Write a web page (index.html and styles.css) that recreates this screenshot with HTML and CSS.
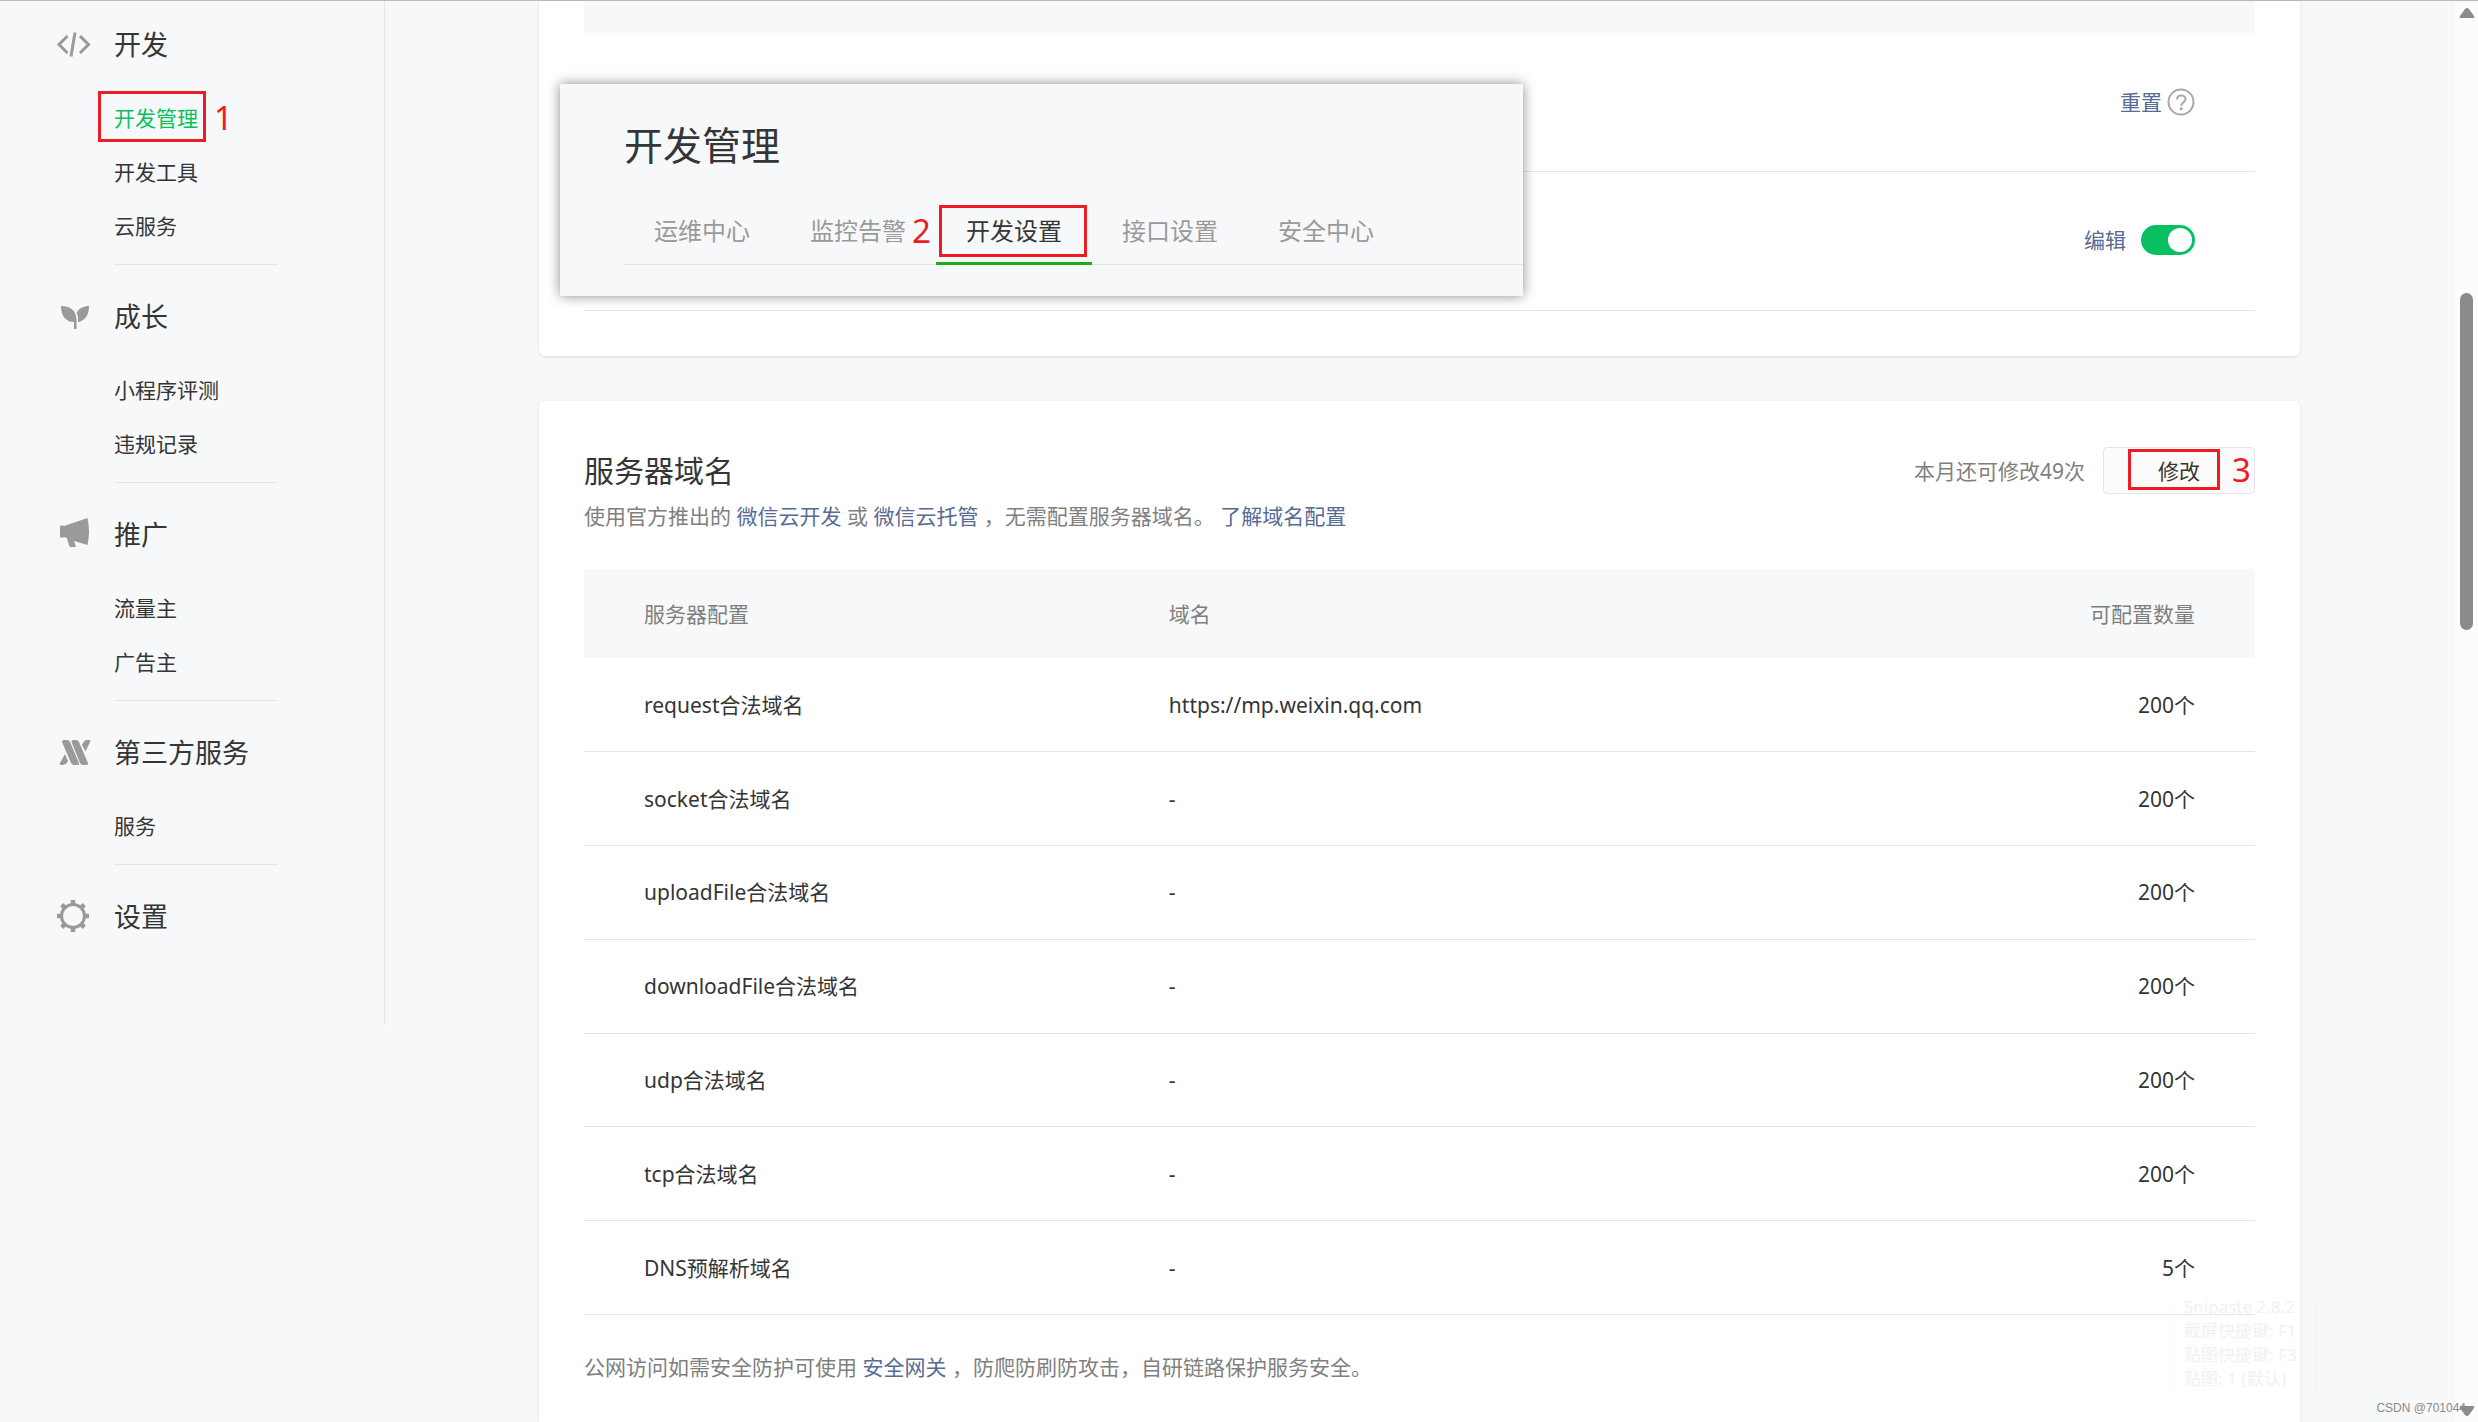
FILE: index.html
```html
<!DOCTYPE html>
<html lang="zh-CN">
<head>
<meta charset="utf-8">
<meta name="viewport" content="width=device-width, initial-scale=1">
<title>开发管理</title>
<link rel="stylesheet" href="styles.css">
</head>
<body>
<div class="page">
  <nav class="sidebar">
    <section class="group">
      <h2 class="group-title">
        <svg class="icon" viewBox="0 0 36 36" aria-hidden="true"><path d="M11.500 9 3 17.500l8.500 8.500M24 9l8.500 8.500L24 26M19 5.500l-4 24" fill="none" stroke="currentColor" stroke-width="3"/></svg>
        开发
      </h2>
      <ul class="items">
        <li><a class="current marked" href="#">开发管理<span class="step step-nav">1</span></a></li>
        <li><a href="#">开发工具</a></li>
        <li><a href="#">云服务</a></li>
      </ul>
    </section>
    <section class="group">
      <h2 class="group-title">
        <svg class="icon" viewBox="0 0 36 36" aria-hidden="true"><path d="M5 7c9 0 15 4 15.500 13v10H18v-7C10 23 5 17 5 7ZM33 7c0 9-4 15-11 16v-4c0-2-.5-3.500-1.500-5C23 9 28 7 33 7Z" fill="currentColor"/></svg>
        成长
      </h2>
      <ul class="items">
        <li><a href="#">小程序评测</a></li>
        <li><a href="#">违规记录</a></li>
      </ul>
    </section>
    <section class="group">
      <h2 class="group-title">
        <svg class="icon" viewBox="0 0 36 36" aria-hidden="true"><path d="M4 9q2-1.500 4 0l23.500-8q3 13.500 0 27L18 24l2 6h-6q-1.500-2-3-9l-3-1q-2 1.500-4 0Z" fill="currentColor"/></svg>
        推广
      </h2>
      <ul class="items">
        <li><a href="#">流量主</a></li>
        <li><a href="#">广告主</a></li>
      </ul>
    </section>
    <section class="group">
      <h2 class="group-title">
        <svg class="icon" viewBox="0 0 36 36" aria-hidden="true"><path d="M6 7q0-2 2-2h3q2 0 3 2l9 21q1 2-2 2h-3q-2 0-3-2ZM15.500 7q0-2 2-2h2.500q2 0 3 2l9 21q1 2-2 2h-3q-2 0-3-2ZM26 10q2-5 5-5h2q2 0 1 2l-4.500 9.500ZM9 19l3 7q-2 4-5 4H5q-2 0-1-2Z" fill="currentColor"/></svg>
        第三方服务
      </h2>
      <ul class="items">
        <li><a href="#">服务</a></li>
      </ul>
    </section>
    <section class="group">
      <h2 class="group-title">
        <svg class="icon" viewBox="0 0 36 36" aria-hidden="true"><g fill="none" stroke="currentColor"><circle cx="17" cy="17" r="11.500" stroke-width="3"/><path d="M17 1v4M17 29v4M1 17h4M29 17h4M5.700 5.700l3 3M25.300 25.300l3 3M5.700 28.300l3-3M25.300 8.700l3-3" stroke-width="4.500"/></g></svg>
        设置
      </h2>
    </section>
  </nav>

  <main class="main">
    <section class="card card-rows">
      <div class="band"></div>
      <div class="row">
        <a href="#">重置</a>
        <svg class="help" viewBox="0 0 28 28" role="img" aria-label="帮助"><g fill="none" stroke="currentColor"><circle cx="14" cy="14" r="12.500" stroke-width="2"/><path d="M10 11.500c0-5.500 8.500-5 8.500-.5 0 3-4 3.500-4.300 7" stroke-width="2"/></g><circle cx="14.200" cy="20.800" r="1.500" fill="currentColor"/></svg>
      </div>
      <div class="row row-switch">
        <a href="#">编辑</a>
        <input class="switch" type="checkbox" aria-label="启用" checked>
      </div>
    </section>

    <section class="card card-domains">
      <header class="card-head">
        <h2>服务器域名</h2>
        <span class="quota">本月还可修改49次</span>
        <button class="edit marked" type="button">修改<span class="step step-edit">3</span></button>
      </header>
      <p class="note">使用官方推出的 <a href="#">微信云开发</a> 或 <a href="#">微信云托管</a> ，无需配置服务器域名。 <a href="#">了解域名配置</a></p>
      <table class="domains">
        <thead>
          <tr><th>服务器配置</th><th>域名</th><th>可配置数量</th></tr>
        </thead>
        <tbody>
          <tr><td>request合法域名</td><td>https://mp.weixin.qq.com</td><td>200个</td></tr>
          <tr><td>socket合法域名</td><td>-</td><td>200个</td></tr>
          <tr><td>uploadFile合法域名</td><td>-</td><td>200个</td></tr>
          <tr><td>downloadFile合法域名</td><td>-</td><td>200个</td></tr>
          <tr><td>udp合法域名</td><td>-</td><td>200个</td></tr>
          <tr><td>tcp合法域名</td><td>-</td><td>200个</td></tr>
          <tr><td>DNS预解析域名</td><td>-</td><td>5个</td></tr>
        </tbody>
      </table>
      <p class="note note-foot">公网访问如需安全防护可使用 <a href="#">安全网关</a> ，防爬防刷防攻击，自研链路保护服务安全。</p>
    </section>

    <aside class="popup">
      <h1>开发管理</h1>
      <div class="tabs">
        <a href="#">运维中心</a>
        <a href="#">监控告警</a>
        <a class="active marked" href="#">开发设置<span class="step step-tab">2</span></a>
        <a href="#">接口设置</a>
        <a href="#">安全中心</a>
      </div>
    </aside>
    <div class="toast">Snipaste 2.8.2<br>截屏快捷键: F1<br>贴图快捷键: F3<br>贴图: 1 [默认]</div>
  </main>

  <div class="scrollbar" aria-hidden="true">
    <svg class="arrow" viewBox="0 0 16 10"><path d="M8 0q1 0 2 1l5 7q1 2-1 2H2q-2 0-1-2l5-7q1-1 2-1Z" fill="currentColor"/></svg>
    <div class="track"><div class="thumb"></div></div>
    <svg class="arrow" viewBox="0 0 16 10"><path d="M8 10q1 0 2-1l5-7q1-2-1-2H2Q0 0 1 2l5 7q1 1 2 1Z" fill="currentColor"/></svg>
  </div>
  <span class="credit">CSDN @701044</span>
</div>
</body>
</html>
```
FILE: styles.css
```css
* { box-sizing: border-box; }

body {
  margin: 0;
  background: #f7f8fa;
  color: #353535;
  font-family: "Noto Sans", "Noto Sans CJK SC", sans-serif;
  font-size: 21px;
  line-height: 30px;
}

h1, h2, p, ul { margin: 0; padding: 0; font-weight: 400; }
ul { list-style: none; }
a { color: #576b95; text-decoration: none; }

.page {
  position: relative;
  display: flex;
  align-items: stretch;
  min-height: 100vh;
  border-top: 1px solid #bbbbbf;
}

/* Sidebar */
.sidebar {
  flex: 0 0 385px;
  align-self: flex-start;
  padding: 16px 0 80px;
  border-right: 1px solid #e4e5e7;
}
.group-title {
  display: flex;
  align-items: center;
  gap: 22px;
  padding-left: 56px;
  font-size: 27px;
  line-height: 56px;
}
.icon { width: 36px; height: 36px; color: #9a9a9a; }
.items {
  width: 164px;
  margin: 18px 0 24px 114px;
  padding-bottom: 11px;
  border-bottom: 1px solid #e4e5e7;
  line-height: 54px;
}
.items a { display: inline-block; color: #353535; }
.items .current { color: #07c160; }

/* Red frames and step numbers */
.marked { position: relative; }
.marked::before {
  content: "";
  position: absolute;
  border: 3px solid #ed1c24;
}
.items .marked::before { inset: 0 -8px 3px -16px; }
.tabs .marked::before { inset: 5px 5px 5px 3px; }
.edit.marked::before { inset: 1px 34px 3px 24px; }
.step {
  position: absolute;
  color: #ed1c24;
  font-size: 33px;
  line-height: 40px;
}
.step-nav { left: 100px; top: 7px; }
.step-tab { left: -24px; top: 11px; }
.step-edit { right: 3px; top: 2px; }

/* Content */
.main {
  position: relative;
  flex: 1;
  display: flex;
  flex-direction: column;
  gap: 45px;
  padding: 0 155px 0 154px;
}
.card {
  padding: 0 45px;
  background: #fff;
  border-radius: 6px;
  box-shadow: 0 1px 3px rgba(0, 0, 0, 0.12);
}
.card-rows { padding-bottom: 45px; border-radius: 0 0 6px 6px; }
.card-domains {
  flex: 1;
  padding-top: 46px;
  padding-bottom: 38px;
  border-radius: 6px 6px 0 0;
}
.band { height: 32px; background: #f7f8fa; }
.row {
  display: flex;
  align-items: center;
  justify-content: flex-end;
  gap: 5px;
  height: 139px;
  padding-right: 60px;
  border-bottom: 1px solid #e4e5e7;
}
.row-switch { gap: 15px; padding-bottom: 3px; }
.help { width: 28px; height: 28px; color: #a8a8a8; }
.switch {
  appearance: none;
  display: flex;
  width: 54px;
  height: 30px;
  margin: 0;
  padding: 3px;
  border-radius: 15px;
  background: #07c160;
}
.switch::before {
  content: "";
  width: 24px;
  height: 24px;
  margin-left: auto;
  border-radius: 50%;
  background: #fff;
}

.card-head { display: flex; align-items: center; gap: 18px; }
.card-head h2 { flex: 1; font-size: 30px; line-height: 46px; }
.quota { color: #7f7f7f; }
.edit {
  width: 152px;
  height: 47px;
  padding: 0;
  border: 1px solid #e4e5e7;
  border-radius: 4px;
  background: #fbfbfb;
  color: #353535;
  font: inherit;
}
.note { margin-top: 7px; color: #7f7f7f; }
.note-foot { margin-top: 37px; }

.domains {
  width: 100%;
  height: 746px;
  margin-top: 38px;
  border-collapse: collapse;
  table-layout: fixed;
  text-align: left;
}
.domains th { height: 89px; padding: 0; background: #f7f8fa; color: #7f7f7f; font-weight: 400; }
.domains td { height: 93px; padding: 0; border-bottom: 1px solid #e4e5e7; }
.domains th:first-child, .domains td:first-child { width: 35%; padding-left: 60px; }
.domains th:last-child, .domains td:last-child { width: 20%; padding-right: 60px; text-align: right; }

/* Floating panel */
.popup {
  position: absolute;
  top: 83px;
  left: 175px;
  width: 963px;
  padding: 32px 0 31px 64px;
  background: #f7f8fa;
  box-shadow: 0 0 12px rgba(0, 0, 0, 0.45);
}
.popup h1 { font-size: 39px; line-height: 58px; }
.tabs {
  display: flex;
  margin-top: 26px;
  border-bottom: 1px solid #e4e5e7;
  font-size: 24px;
  line-height: 62px;
}
.tabs a { margin-bottom: -1px; padding: 0 30px; color: #9a9a9a; }
.tabs .active { border-bottom: 3px solid #1aad19; color: #353535; }

.toast {
  position: absolute;
  right: 140px;
  bottom: 19px;
  width: 143px;
  padding: 2px 12px 12px;
  border-radius: 6px;
  box-shadow: 0 0 6px rgba(0, 0, 0, 0.02);
  color: #f1f1f1;
  font-size: 17px;
  line-height: 24px;
  white-space: nowrap;
}

/* Scroll bar */
.scrollbar {
  flex: 0 0 23px;
  display: flex;
  flex-direction: column;
  align-items: center;
  padding: 7px 0 6px;
  background: #fcfcfc;
  color: #8b8b8b;
}
.arrow { width: 16px; height: 10px; }
.track { flex: 1; padding-top: 275px; }
.thumb { width: 13px; height: 337px; border-radius: 7px; background: #8b8b8b; }
.credit {
  position: absolute;
  right: 12px;
  bottom: 4px;
  color: #8b8b8b;
  font-family: "Liberation Sans", sans-serif;
  font-size: 12px;
  line-height: 20px;
}
```
